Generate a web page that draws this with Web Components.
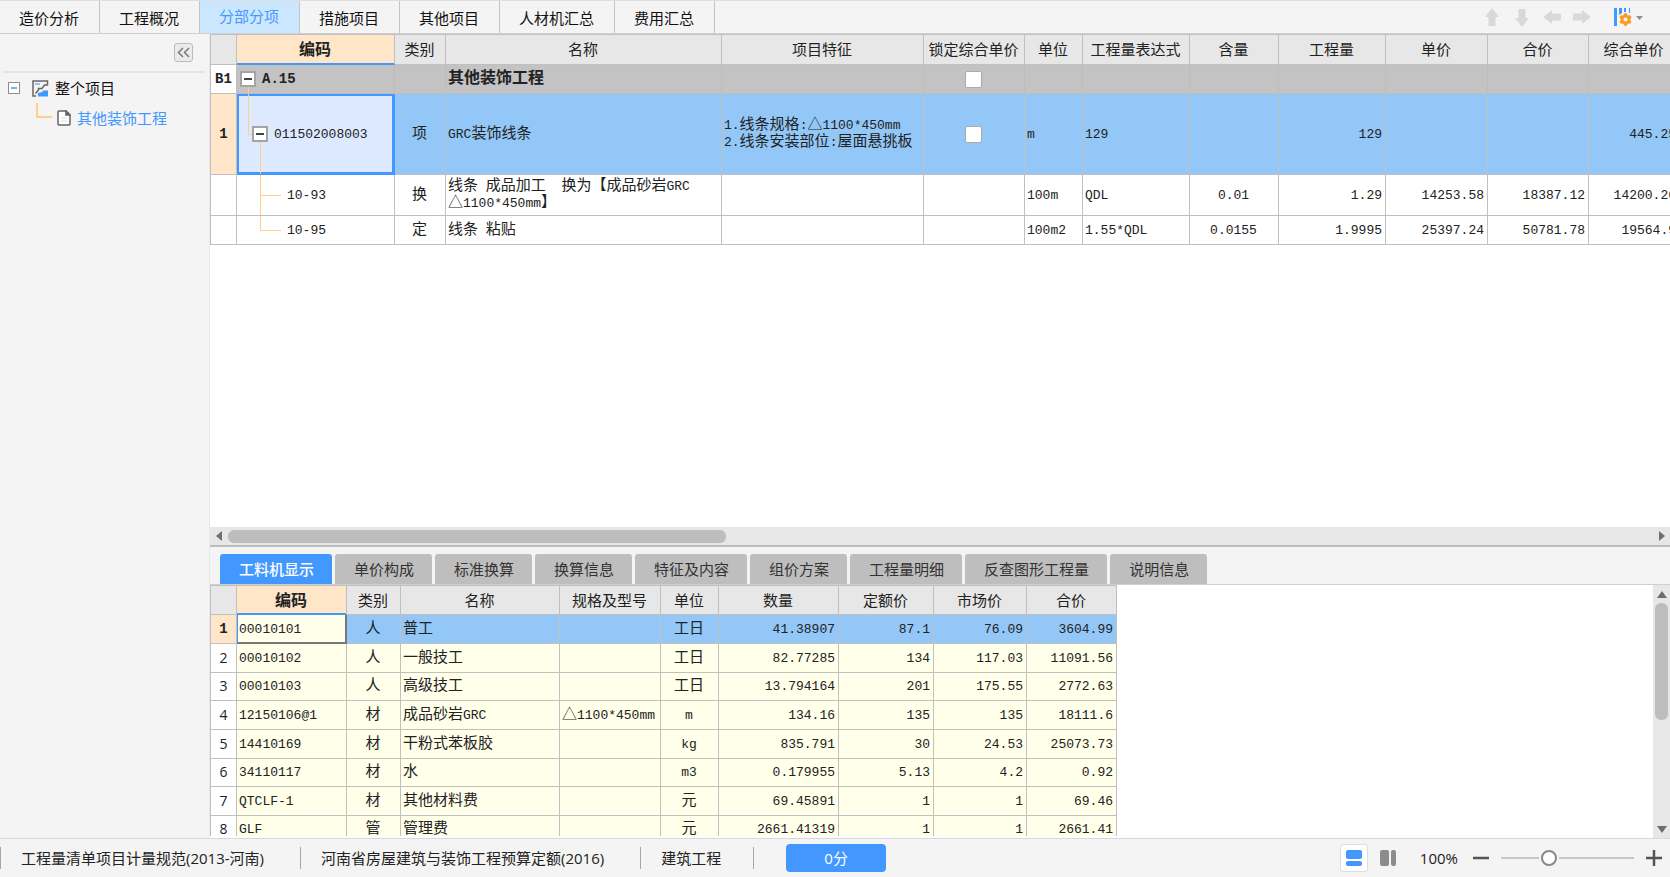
<!DOCTYPE html>
<html lang="zh-CN">
<head>
<meta charset="utf-8">
<title>分部分项</title>
<style>
html, body { height: 100%; margin: 0; }
body {
  --bg: #f4f4f4; --line: #c0c0c0; --blue: #4398ff; --ink: #222;
  --ui: "Open Sans", "Noto Sans CJK SC", sans-serif;
  --mono: "Liberation Mono", "Noto Sans CJK SC", monospace;
  font: 15px/20px var(--ui); color: var(--ink); background: var(--bg); overflow: hidden;
}
</style>
</head>
<body>
<cost-app>
  <top-bar slot="top"></top-bar>
  <side-tree slot="side"></side-tree>
  <data-grid slot="main" id="items"></data-grid>
  <h-scroll slot="main"></h-scroll>
  <detail-tabs slot="detail"></detail-tabs>
  <data-grid slot="detail" id="resources" kind="detail"></data-grid>
  <status-bar slot="status"></status-bar>
</cost-app>

<script>
const component = (name, html, setup) => customElements.define(name, class extends HTMLElement {
  constructor() {
    super();
    const t = document.createElement('template');
    t.innerHTML = html;
    this.attachShadow({ mode: 'open' }).append(t.content.cloneNode(true));
    if (setup) setup.call(this, this.shadowRoot);
  }
});

component('cost-app', `
<style>
:host { display: grid; height: 100vh; grid-template: auto minmax(0, 1fr) 39px / 210px minmax(0, 1fr); background: var(--bg); }
header, footer { grid-column: 1 / -1; min-width: 0; }
main { display: grid; grid-template-rows: minmax(0, 1fr) 291px; min-width: 0; }
section { display: flex; flex-direction: column; min-height: 0; min-width: 0; }
.upper { background: #fff; border-bottom: 2px solid #bcbcbc; }
</style>
<header><slot name="top"></slot></header>
<aside><slot name="side"></slot></aside>
<main>
  <section class="upper"><slot name="main"></slot></section>
  <section><slot name="detail"></slot></section>
</main>
<footer><slot name="status"></slot></footer>`);

component('top-bar', `
<style>
:host { display: flex; justify-content: space-between; height: 34px; box-sizing: border-box; border-top: 1px solid #dedede; border-bottom: 1px solid #d0d0d0; }
nav, .tools { display: flex; align-items: stretch; }
nav button { font: inherit; color: #111; background: none; border: 0; border-right: 1px solid #c4c4c4; margin: 0; padding: 3px 20px 1px 19px; }
nav button.on { background: #cbe6ff; color: var(--blue); padding: 0 20px 2px 19px; }
.tools { align-items: center; padding-right: 26px; gap: 8px; }
.tools button { display: flex; border: 0; padding: 0; background: none; width: 22px; justify-content: center; }
.tools button.set { width: 32px; margin-left: 11px; }
</style>
<nav>
  <button>造价分析</button><button>工程概况</button><button class="on">分部分项</button><button>措施项目</button><button>其他项目</button><button>人材机汇总</button><button>费用汇总</button>
</nav>
<div class="tools">
  <button aria-label="上移"><svg width="18" height="20"><path d="M9 1 16 10H12.500V19H5.500V10H2Z" fill="#d9d9d9"/></svg></button>
  <button aria-label="下移"><svg width="18" height="20"><path d="M9 20 2 11H5.500V2H12.500V11H16Z" fill="#d9d9d9"/></svg></button>
  <button aria-label="左移"><svg width="20" height="18"><path d="M1 9 10 2V5.500H19V12.500H10V16Z" fill="#d9d9d9"/></svg></button>
  <button aria-label="右移"><svg width="20" height="18"><path d="M19 9 10 2V5.500H1V12.500H10V16Z" fill="#d9d9d9"/></svg></button>
  <button class="set" aria-label="列设置"><svg width="30" height="20"><g fill="#4398ff"><path d="M1 1h3v18H1zM6 1h3v5L6 8zM11 1h2v4h-2zM16 1h1v5h-1z"/></g><g fill="#fb9b20"><circle cx="12.500" cy="12.500" r="4.800"/><circle cx="12.500" cy="8" r="1.900"/><circle cx="12.500" cy="17" r="1.900"/><circle cx="8.600" cy="10.200" r="1.900"/><circle cx="16.400" cy="10.200" r="1.900"/><circle cx="8.600" cy="14.800" r="1.900"/><circle cx="16.400" cy="14.800" r="1.900"/></g><circle cx="12.500" cy="12.500" r="2" fill="#fff"/><path d="M23 9h7l-3.500 4z" fill="#909090"/></svg></button>
</div>`);

component('side-tree', `
<style>
:host { display: block; height: 100%; box-sizing: border-box; border-right: 1px solid #e9e9e9; }
.head { display: flex; justify-content: flex-end; padding: 9px 16px 9px 0; margin: 0 4px 0 3px; border-bottom: 2px solid #e4e4e4; }
.head button { display: flex; width: 19px; height: 19px; padding: 0; border: 1px solid #bbb; border-radius: 3px; background: #ebebeb; align-items: center; justify-content: center; margin-right: -4px; }
ul { list-style: none; margin: 0; padding: 0; }
li > div, li > a { display: flex; align-items: center; height: 30px; color: #111; text-decoration: none; }
.root { padding-left: 8px; }
.root svg:first-child { margin-right: 12px; }
.root svg + svg { margin-right: 6px; }
li > a { padding-left: 36px; color: var(--blue); }
li > a svg:first-child { margin-right: 5px; align-self: flex-start; }
li > a svg + svg { margin-right: 6px; }
</style>
<div class="head"><button aria-label="收起"><svg width="13" height="11" fill="none" stroke="#777" stroke-width="1.500"><path d="M6 1 1.500 5.500 6 10M12 1 7.500 5.500 12 10"/></svg></button></div>
<ul><li>
  <div class="root"><svg width="12" height="12"><rect x=".5" y=".5" width="11" height="11" fill="#fff" stroke="#8d8d8d"/><path d="M3 6h6" stroke="#2fa8e0" stroke-width="1.500"/></svg><svg width="17" height="17" fill="none" stroke="#666" stroke-width="1.500"><path d="M4 16H1V1H15.500V5H12.500L10 8.500H6.500V10L3.500 13.500"/><path d="M3 4h5" stroke="#8cc8ff" stroke-width="2"/><path d="M6 16.500V13l4-1 1-1.500h5v6z" fill="#4398ff" stroke="none"/></svg>整个项目</div>
  <ul><li><a href="#"><svg width="16" height="16" fill="none" stroke="#ffcf90" stroke-width="2"><path d="M1 0V14H16"/></svg><svg width="14" height="16" fill="#fff" stroke="#666" stroke-width="1.500"><path d="M1 2Q1 1 2 1H9L13 5V14Q13 15 12 15H2Q1 15 1 14Z"/><path d="M9 1V5H13Z" fill="#555"/><path d="M4 8h6M4 11h6" stroke="#ddd" stroke-width="1"/></svg>其他装饰工程</a></li></ul>
</li></ul>`);

component('data-grid', `
<style>
:host { display: flex; flex: 1; min-height: 0; min-width: 0; background: #fff; overflow: hidden; }
.view { flex: 1; min-width: 0; overflow: hidden; }
table { table-layout: fixed; border-collapse: separate; border-spacing: 0; border-left: 1px solid var(--line); border-top: 1px solid var(--line); width: 0; font: 15px/17px var(--mono); }
th, td { box-sizing: border-box; padding: 0 3px 0 2px; border-right: 1px solid var(--line); border-bottom: 1px solid var(--line); font-weight: 400; white-space: pre; overflow: hidden; text-align: left; position: relative; }
thead th { background: #e7e7e7; text-align: center; padding: 4px 1px 0 0; }
.m { font-size: 13px; }
tbody th { background: #fff; text-align: center; padding: 0; }
thead th.code { background: #ffe6c8; font-weight: 700; font-size: 16px; box-shadow: inset 0 -1px var(--blue); border-bottom-color: var(--blue); }
.c { text-align: center; } .r { text-align: right; }
tr.sel > td { background: #92c7f7; }
tr.sel > th { background: #ffe6c8; font-weight: 700; }
tr.sum > td { background: #c3c3c3; border-color: #bcbcbc; font-weight: 700; font-size: 16px; }
tr.sum .m, tbody tr.sum > th .m, tr.sel > th .m { font-size: 14px; font-weight: 700; }
input { appearance: none; display: block; width: 17px; height: 17px; margin: 0 auto; background: #fff; border: 1px solid #aaa; border-radius: 2px; }
.node { display: flex; align-items: center; height: 100%; }
.node button { width: 16px; height: 16px; padding: 0; box-sizing: border-box; border: 2px solid #a5a5a5; background: #fff; display: flex; align-items: center; justify-content: center; }
.node button::before { content: ""; width: 8px; height: 2px; background: #444; }
.l0 { padding-left: 1px; gap: 6px; } .l1 { padding-left: 13px; gap: 6px; } .l2 { padding-left: 48px; }
/* connector strokes of the tree lie behind the cell text */
i { position: absolute; background: #ffcf90; }
.l0 i { left: 11px; top: 22px; bottom: 0; width: 1px; }
.l1 i.a { left: 11px; top: 0; bottom: 50%; width: 1px; }
.l1 i.b { left: 11px; top: 50%; height: 1px; width: 4px; }
.l1 i.d { left: 23px; top: 60%; bottom: 0; width: 1px; }
.l2 i.a { left: 23px; top: 0; bottom: 0; width: 1px; }
.l2 i.b { left: 23px; top: 50%; height: 1px; width: 21px; }
.l2.last i.a { bottom: 50%; }
tr.sel > td.focus { background: #dce9ff; box-shadow: inset 0 0 0 2px var(--blue); border-color: var(--blue); }
:host([kind=detail]) { border-top: 1px solid #d0d0d0; }
:host([kind=detail]) .view { margin-bottom: 2px; }
:host([kind=detail]) td { background: #ffffea; }
:host([kind=detail]) tr.sel > td { background: #92c7f7; }
:host([kind=detail]) tr.sel > td.focus { background: #ffffea; box-shadow: inset 1px 0 var(--blue), inset -1px -1px #777; border-color: #777; }
:host([kind=detail]) tbody tr:not(.sel) > th .m { font: 14px/17px var(--ui); }
.bar { display: none; width: 17px; background: #e7e7e7; flex-direction: column; align-items: center; padding: 6px 0 5px; box-sizing: border-box; justify-content: space-between; }
:host([kind=detail]) .bar { display: flex; }
.bar b { width: 13px; height: 117px; border-radius: 6px; background: #bdbdbd; margin: 5px 0 auto; }
.bar svg { display: block; }
</style>
<div class="view"><table><colgroup></colgroup><thead><tr></tr></thead><tbody></tbody></table></div>
<div class="bar"><svg width="10" height="7"><path d="M0 7 5 0 10 7Z" fill="#6d6d75"/></svg><b></b><svg width="10" height="7"><path d="M0 0 5 7 10 0Z" fill="#6d6d75"/></svg></div>`,
function (root) {
  const wrap = s => s.replace(/[\x20-\x7e]+/g, '<span class="m">$&</span>');
  const nodeHtml = (lvl, text) => {
    const t = `<span>${wrap(text)}</span>`, btn = '<button aria-label="折叠"></button>';
    if (lvl === 0) return `<div class="node l0"><i></i>${btn}${t}</div>`;
    if (lvl === 1) return `<div class="node l1"><i class="a"></i><i class="b"></i><i class="d"></i>${btn}${t}</div>`;
    return `<div class="node l2${lvl === 3 ? ' last' : ''}"><i class="a"></i><i class="b"></i>${t}</div>`;
  };
  this.load = ({ columns, headHeight, rows }) => {
    root.querySelector('colgroup').innerHTML = columns.map(c => `<col style="width:${c[1]}px">`).join('');
    const head = root.querySelector('thead tr');
    head.style.height = headHeight + 'px';
    head.innerHTML = columns.map((c, i) => `<th scope="col"${i === 1 ? ' class="code"' : ''}>${c[0]}</th>`).join('');
    root.querySelector('tbody').innerHTML = rows.map(r => `<tr class="${r.cls || ''}" style="height:${r.h}px">` + r.cells.map((v, i) => {
      if (i === 0) return `<th scope="row">${wrap(v)}</th>`;
      if (v === '[]') return '<td><input type="checkbox" aria-label="锁定综合单价"></td>';
      const focus = i === 1 && r.cls === 'sel' ? ' focus' : '';
      const body = i === 1 && r.level !== undefined ? nodeHtml(r.level, v) : wrap(v);
      return `<td class="${columns[i][2] || ''}${focus}" style="height:${r.h}px">${body}</td>`;
    }).join('') + '</tr>').join('');
  };
});

component('h-scroll', `
<style>
:host { display: flex; align-items: center; height: 18px; background: #e7e7e7; padding: 0 5px 0 6px; }
b { width: 498px; height: 13px; border-radius: 6px; background: #bdbdbd; margin: 0 auto 0 6px; }
</style>
<svg width="6" height="10"><path d="M6 0 0 5 6 10Z" fill="#6d6d75"/></svg><b></b><svg width="6" height="10"><path d="M0 0 6 5 0 10Z" fill="#6d6d75"/></svg>`);

component('detail-tabs', `
<style>
:host { display: flex; gap: 3px; padding: 7px 10px 0; height: 30px; }
button { font: inherit; color: #333; background: #bebebe; border: 0; border-radius: 3px 3px 0 0; margin: 0; padding: 0 18px 0 19px; }
button.on { background: var(--blue); color: #fff; font-weight: 500; }
</style>
<button class="on">工料机显示</button><button>单价构成</button><button>标准换算</button><button>换算信息</button><button>特征及内容</button><button>组价方案</button><button>工程量明细</button><button>反查图形工程量</button><button>说明信息</button>`);

component('status-bar', `
<style>
:host { display: flex; align-items: center; height: 39px; box-sizing: border-box; border-top: 1px solid #d8d8d8; padding-right: 8px; color: #222; }
.info { border-left: 1px solid #a0a8b0; line-height: 22px; padding: 0 36px 0 20px; white-space: nowrap; }
.info.end { padding-right: 32px; }
.score { font: inherit; color: #fff; width: 100px; height: 28px; padding: 0; border: 0; border-radius: 4px; background: var(--blue); }
.mark { width: 1px; height: 22px; background: #a0a8b0; margin-right: 32px; }
.right { margin-left: auto; display: flex; align-items: center; }
.right button { display: flex; align-items: center; justify-content: center; border: 0; padding: 0; background: none; width: 16px; height: 28px; }
.right button.view { width: 28px; box-sizing: border-box; border: 1px solid #ddd; border-radius: 3px; background: #fff; margin-right: 12px; }
label { padding: 0 15px 0 24px; }
input { appearance: none; width: 133px; height: 16px; margin: 0 12px; background: linear-gradient(#c8c8c8, #c8c8c8) center / 100% 2px no-repeat; }
input::-webkit-slider-thumb { appearance: none; width: 16px; height: 16px; box-sizing: border-box; border-radius: 50%; border: 2px solid #888; background: #fff; box-shadow: 0 0 0 2px var(--bg); }
</style>
<span class="info">工程量清单项目计量规范(2013-河南)</span>
<span class="info">河南省房屋建筑与装饰工程预算定额(2016)</span>
<span class="info end">建筑工程</span>
<span class="mark"></span>
<button class="score">0分</button>
<div class="right">
  <button class="view" aria-label="上下布局"><svg width="16" height="16" fill="#4398ff"><rect width="16" height="9" rx="2"/><rect y="11" width="16" height="5" rx="2"/></svg></button>
  <button aria-label="左右布局"><svg width="16" height="16" fill="#8c8c8c"><rect width="9" height="16" rx="2"/><rect x="11" width="5" height="16" rx="2"/></svg></button>
  <label for="zoom">100%</label>
  <button aria-label="缩小"><svg width="16" height="16"><path d="M0 8h16" stroke="#555" stroke-width="2.500"/></svg></button>
  <input id="zoom" type="range" min="0" max="100" value="34">
  <button aria-label="放大"><svg width="16" height="16"><path d="M0 8h16M8 0v16" stroke="#555" stroke-width="2.500"/></svg></button>
</div>`);

document.getElementById('items').load({
  headHeight: 30,
  columns: [['', 26], ['编码', 158], ['类别', 51, 'c'], ['名称', 276], ['项目特征', 202], ['锁定综合单价', 101], ['单位', 58], ['工程量表达式', 107], ['含量', 89, 'c'], ['工程量', 107, 'r'], ['单价', 102, 'r'], ['合价', 101, 'r'], ['综合单价', 91, 'r']],
  rows: [
    { cls: 'sum', h: 29, level: 0, cells: ['B1', 'A.15', '', '其他装饰工程', '', '[]', '', '', '', '', '', '', ''] },
    { cls: 'sel', h: 81, level: 1, cells: ['1', '011502008003', '项', 'GRC装饰线条', '1.线条规格:△1100*450mm\n2.线条安装部位:屋面悬挑板', '[]', 'm', '129', '', '129', '', '', '445.25'] },
    { h: 41, level: 2, cells: ['', '10-93', '换', '线条 成品加工  换为【成品砂岩GRC\n△1100*450mm】', '', '', '100m', 'QDL', '0.01', '1.29', '14253.58', '18387.12', '14200.26'] },
    { h: 29, level: 3, cells: ['', '10-95', '定', '线条 粘贴', '', '', '100m2', '1.55*QDL', '0.0155', '1.9995', '25397.24', '50781.78', '19564.9'] }
  ]
});

document.getElementById('resources').load({
  headHeight: 29,
  columns: [['', 26], ['编码', 110], ['类别', 54, 'c'], ['名称', 159], ['规格及型号', 101], ['单位', 58, 'c'], ['数量', 120, 'r'], ['定额价', 95, 'r'], ['市场价', 93, 'r'], ['合价', 90, 'r']],
  rows: [
    ['1', '00010101', '人', '普工', '', '工日', '41.38907', '87.1', '76.09', '3604.99'],
    ['2', '00010102', '人', '一般技工', '', '工日', '82.77285', '134', '117.03', '11091.56'],
    ['3', '00010103', '人', '高级技工', '', '工日', '13.794164', '201', '175.55', '2772.63'],
    ['4', '12150106@1', '材', '成品砂岩GRC', '△1100*450mm', 'm', '134.16', '135', '135', '18111.6'],
    ['5', '14410169', '材', '干粉式苯板胶', '', 'kg', '835.791', '30', '24.53', '25073.73'],
    ['6', '34110117', '材', '水', '', 'm3', '0.179955', '5.13', '4.2', '0.92'],
    ['7', 'QTCLF-1', '材', '其他材料费', '', '元', '69.45891', '1', '1', '69.46'],
    ['8', 'GLF', '管', '管理费', '', '元', '2661.41319', '1', '1', '2661.41']
  ].map((cells, i) => ({ cells, h: i % 3 === 2 || i === 7 ? 28 : 29, cls: i ? '' : 'sel' }))
});
</script>
</body>
</html>
